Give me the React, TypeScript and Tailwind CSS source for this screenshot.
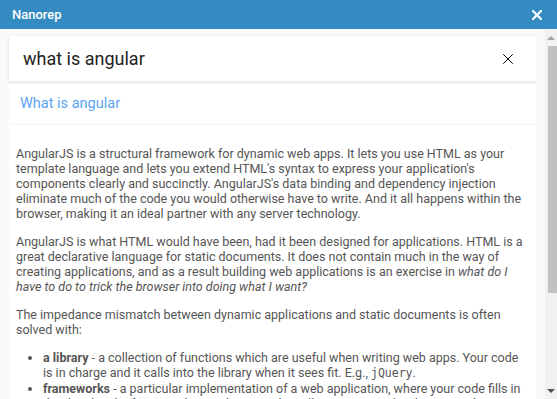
import { X } from 'lucide-react';

const ScrollBar = () => {
	return (
		<div className="w-[12px] shrink-0 h-full bg-[#f1f1f1] flex flex-col items-center">
			<div className="h-[17px] w-full flex items-center justify-center">
				<div className="w-0 h-0 border-l-[4px] border-r-[4px] border-b-[4px] border-l-transparent border-r-transparent border-b-[#a3a3a3]" />
			</div>
			<div className="w-[9px] h-[247px] bg-[#c1c1c1] ml-[2px]" />
			<div className="flex-1" />
			<div className="h-[17px] w-full flex items-center justify-center">
				<div className="w-0 h-0 border-l-[4px] border-r-[4px] border-t-[4px] border-l-transparent border-r-transparent border-t-[#505050]" />
			</div>
		</div>
	);
};

const App = () => {
	return (
		<div className="w-[557px] h-[399px] overflow-hidden flex flex-col font-['Roboto',sans-serif]">
			<header className="h-[29px] shrink-0 bg-[#348bc1] flex items-center justify-between pl-[12px] pr-[12px]">
				<span className="text-white text-[13px] font-medium">Nanorep</span>
				<X className="text-white w-[16px] h-[16px]" strokeWidth={3.2} />
			</header>

			<div className="flex-1 flex bg-[#fafafa] min-h-0">
				<main className="w-[536px] shrink-0 pl-[9px] pt-[7px] flex flex-col gap-[3px] overflow-hidden">
					<div className="h-[45px] shrink-0 bg-white shadow-[0_1px_4px_rgba(0,0,0,0.12)] flex items-center justify-between pl-[14px] pr-[19px]">
						<span className="text-[18px] text-[#222]">what is angular</span>
						<X className="text-black w-[18px] h-[18px]" strokeWidth={1.3} />
					</div>

					<div className="bg-white flex-1 flex flex-col w-[527px] overflow-hidden">
						<div className="h-[41px] shrink-0 flex items-center pl-[11px] border-b border-[#f4f4f4]">
							<span className="text-[14.5px] text-[#5aa4f3]">What is angular</span>
						</div>
						<div className="w-[516px] shrink-0 pl-[7px] pt-[21px] text-[12.5px] leading-[15px] text-[#555] flex flex-col gap-[13px]">
							<p>
								AngularJS is a structural framework for dynamic web apps. It lets you use HTML as your template language and lets you extend HTML's syntax to express your application's components clearly and succinctly. AngularJS's data binding and dependency injection eliminate much of the code you would otherwise have to write. And it all happens within the browser, making it an ideal partner with any server technology.
							</p>
							<p>
								AngularJS is what HTML would have been, had it been designed for applications. HTML is a great declarative language for static documents. It does not contain much in the way of creating applications, and as a result building web applications is an exercise in <em>what do I have to do to trick the browser into doing what I want?</em>
							</p>
							<p>The impedance mismatch between dynamic applications and static documents is often solved with:</p>
							<ul className="list-disc pl-[27px]">
								<li>
									<strong className="font-bold">a library</strong> - a collection of functions which are useful when writing web apps. Your code is in charge and it calls into the library when it sees fit. E.g., <code className="font-['DejaVu_Sans_Mono',monospace] text-[11.5px]">jQuery</code>.
								</li>
								<li>
									<strong className="font-bold">frameworks</strong> - a particular implementation of a web application, where your code fills in the details. The framework is in charge and it calls into your code when it needs something app specific. E.g., durandal, ember, etc.
								</li>
							</ul>
						</div>
					</div>
				</main>
				<div className="w-[9px] shrink-0" />
				<ScrollBar />
			</div>
		</div>
	);
};

export default App;
